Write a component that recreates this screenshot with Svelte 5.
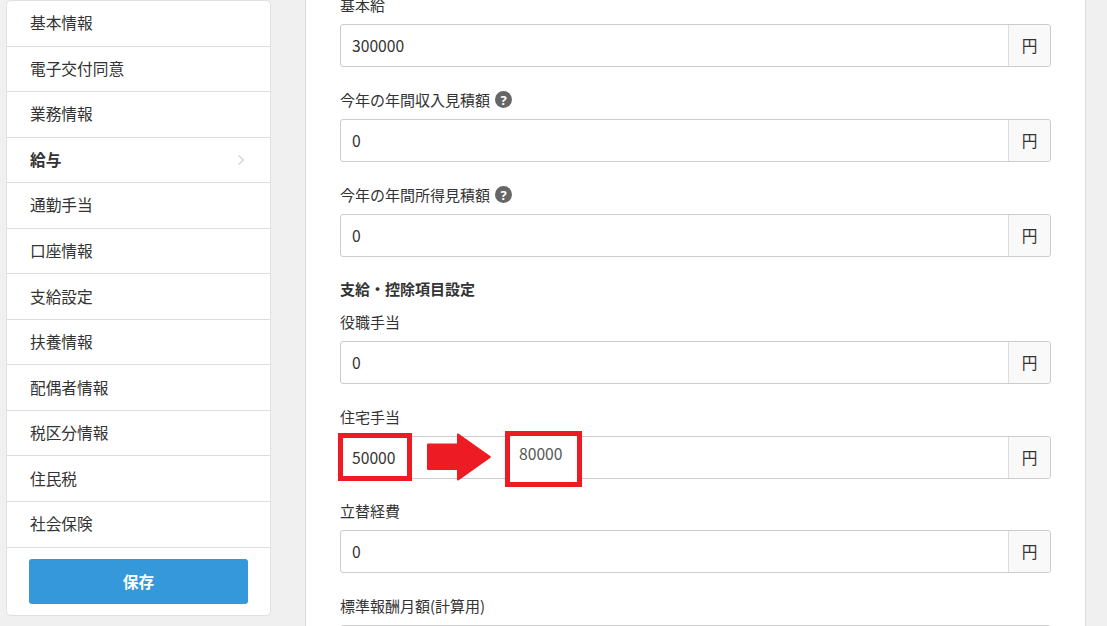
<script>
  const menu = ['基本情報','電子交付同意','業務情報','給与','通勤手当','口座情報','支給設定','扶養情報','配偶者情報','税区分情報','住民税','社会保険'];
  const activeItem = '給与';
  const top = [
    { label: '基本給', value: '300000' },
    { label: '今年の年間収入見積額', value: '0', help: true },
    { label: '今年の年間所得見積額', value: '0', help: true }
  ];
  const bottom = [
    { label: '役職手当', value: '0' },
    { label: '住宅手当', value: '50000', note: true },
    { label: '立替経費', value: '0' },
    { label: '標準報酬月額(計算用)', value: '' }
  ];
</script>

{#snippet field(f)}
  <div class="field">
    <div class="label">
      <span>{f.label}</span>
      {#if f.help}<span class="help">?</span>{/if}
    </div>
    <div class="group">
      <div class="input">{f.value}</div>
      <div class="addon">円</div>
      {#if f.note}
        <div class="box before"></div>
        <svg class="arrow" viewBox="0 0 64 48" width="64" height="48" aria-hidden="true">
          <path d="M0 11.5a1 1 0 0 1 1-1H30V1.500a1 1 0 0 1 1.700-.7L63.500 23.300a1 1 0 0 1 0 1.400L31.700 47.200a1 1 0 0 1-1.700-.7V37H1a1 1 0 0 1-1-1z" fill="#ed1c24"/>
        </svg>
        <div class="box after">80000</div>
      {/if}
    </div>
  </div>
{/snippet}

<div class="page">
  <aside class="side">
    <nav>
      {#each menu as item}
        <div class="item" class:active={item === activeItem}>
          <span>{item}</span>
          {#if item === activeItem}
            <svg class="chev" width="8" height="12" viewBox="0 0 8 12" aria-hidden="true"><path d="M1.500 1.500 6.500 6l-5 4.500" fill="none" stroke="#cfcfcf" stroke-width="1.100"/></svg>
          {/if}
        </div>
      {/each}
    </nav>
    <div class="foot"><button type="button">保存</button></div>
  </aside>

  <main class="panel">
    {#each top as f}{@render field(f)}{/each}
    <div class="heading">支給・控除項目設定</div>
    {#each bottom as f}{@render field(f)}{/each}
  </main>
</div>

<style>
  :global(body) {
    margin: 0;
    background: #f0f0f0;
  }
  .page {
    display: flex;
    align-items: flex-start;
    gap: 34px;
    height: 626px;
    padding-left: 6px;
    overflow: hidden;
    font-family: "Noto Sans CJK JP", "Noto Sans", sans-serif;
    color: #333;
  }
  .side {
    box-sizing: border-box;
    width: 265px;
    flex: none;
    background: #fff;
    border: 1px solid #e0e0e0;
    border-radius: 5px;
  }
  .item {
    box-sizing: border-box;
    display: flex;
    align-items: center;
    justify-content: space-between;
    height: 45.550px;
    padding: 0 25px 0 23px;
    border-bottom: 1px solid #ddd;
    font-size: 15.700px;
  }
  .item span {
    margin-top: -1px;
  }
  .active {
    font-weight: 700;
  }
  .foot {
    padding: 11px 22px;
  }
  button {
    display: block;
    width: 100%;
    height: 45px;
    border: 0;
    border-radius: 3px;
    background: #3498db;
    color: #fff;
    font: 700 15.700px "Noto Sans CJK JP", sans-serif;
  }
  .panel {
    box-sizing: border-box;
    width: 781px;
    flex: none;
    margin-top: -6px;
    padding: 0 34px;
    min-height: 700px;
    background: #fff;
    border-left: 1px solid #ddd;
    border-right: 1px solid #ddd;
  }
  .field {
    margin-bottom: 21.800px;
  }
  .label {
    display: flex;
    align-items: center;
    gap: 5px;
    height: 22px;
    margin-bottom: 8px;
    font-size: 15px;
    line-height: 22px;
  }
  .help {
    display: flex;
    align-items: center;
    justify-content: center;
    width: 17px;
    height: 17px;
    border-radius: 50%;
    background: #666;
    color: #fff;
    font: 700 13px "Noto Sans", sans-serif;
  }
  .heading {
    height: 22px;
    margin: 0 0 10.500px;
    font-size: 15px;
    font-weight: 700;
    line-height: 22px;
  }
  .group {
    position: relative;
    box-sizing: border-box;
    display: flex;
    height: 43px;
    border: 1px solid #ccc;
    border-radius: 3px;
    font-size: 15.700px;
    line-height: 41px;
  }
  .input {
    flex: 1;
    padding-left: 11px;
  }
  .addon {
    box-sizing: border-box;
    width: 42px;
    border-left: 1px solid #ddd;
    border-radius: 0 3px 3px 0;
    background: #f9f9f9;
    text-align: center;
  }
  .box {
    position: absolute;
    box-sizing: border-box;
    border: 5px solid #ed1c24;
  }
  .before {
    left: -3px;
    top: -4px;
    width: 74px;
    height: 48px;
  }
  .after {
    left: 164px;
    top: -6px;
    width: 77px;
    height: 56px;
    padding-left: 9px;
    background: #fff;
    color: #555;
    line-height: 36px;
  }
  .arrow {
    position: absolute;
    left: 86px;
    top: -4px;
  }
</style>
